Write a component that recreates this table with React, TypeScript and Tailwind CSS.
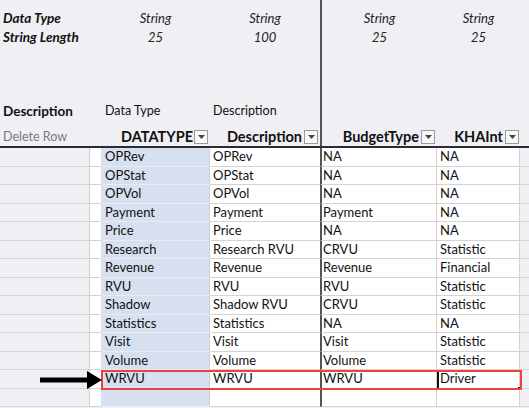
import React from "react";

const font = { fontFamily: "Lato, 'Open Sans', sans-serif" };

const rows = [
  ["OPRev", "OPRev", "NA", "NA"],
  ["OPStat", "OPStat", "NA", "NA"],
  ["OPVol", "OPVol", "NA", "NA"],
  ["Payment", "Payment", "Payment", "NA"],
  ["Price", "Price", "NA", "NA"],
  ["Research", "Research RVU", "CRVU", "Statistic"],
  ["Revenue", "Revenue", "Revenue", "Financial"],
  ["RVU", "RVU", "RVU", "Statistic"],
  ["Shadow", "Shadow RVU", "CRVU", "Statistic"],
  ["Statistics", "Statistics", "NA", "NA"],
  ["Visit", "Visit", "Visit", "Statistic"],
  ["Volume", "Volume", "Volume", "Statistic"],
  ["WRVU", "WRVU", "WRVU", "Driver"],
];

function Drop() {
  return (
    <span className="w-[14px] h-[14px] border border-[#9a9a9a] bg-[#f7f7f7] flex items-center justify-center shrink-0">
      <svg width="7" height="4" viewBox="0 0 7 4">
        <path d="M0 0h7L3.5 4z" fill="#444" />
      </svg>
    </span>
  );
}

function TopRow({ a, b, c, d, e, cls = "" }: { a?: React.ReactNode; b?: string; c?: string; d?: string; e?: string; cls?: string }) {
  return (
    <div className={`flex h-[19px] items-center ${cls}`}>
      <div className="w-[101px] pl-[3px] whitespace-nowrap">{a}</div>
      <div className="w-[109px] text-center">{b}</div>
      <div className="w-[110px] text-center h-full flex items-center justify-center">{c}</div>
      <div className="w-[117px] border-l-2 border-[#555] h-full flex items-center justify-center">{d}</div>
      <div className="w-[83px] text-center">{e}</div>
      <div className="flex-1" />
    </div>
  );
}

function DataRow({ r, last }: { r: string[]; last?: boolean }) {
  const line = "border-b border-[#d4d4d4]";
  return (
    <div className="flex h-[18.5px] text-[13px] text-[#111] leading-none">
      <div className={`w-[90px] ${line} border-r border-r-[#cfcfcf]`} />
      <div className={`w-[11px] bg-white ${line}`} />
      <div className="w-[109px] bg-[#d7e0ef] border-b border-[#e6ebf4] border-r border-r-[#c9d0dc] pl-[4px] flex items-center">{r[0]}</div>
      <div className={`w-[110px] bg-white ${line} pl-[3px] flex items-center whitespace-nowrap`}>{r[1]}</div>
      <div className={`w-[117px] bg-white ${line} border-l-2 border-l-[#555] border-r border-r-[#d4d4d4] pl-[1px] flex items-center`}>{r[2]}</div>
      <div
        className={`w-[83px] bg-white ${line} border-r border-r-[#d4d4d4] flex items-center relative ${
          last ? "border-l-2 border-l-[#111] pl-[1px]" : "pl-[3px]"
        }`}
      >
        {r[3]}
        {last && <span className="absolute right-[-3px] bottom-[-3px] w-[5px] h-[5px] bg-[#111] border border-white" />}
      </div>
      <div className={`flex-1 ${line}`} />
    </div>
  );
}

export default function App() {
  return (
    <div className="w-[529px] h-[408px] bg-[#f0eff3] overflow-hidden relative text-[#111]" style={font}>
      <div className="h-[9px] flex">
        <div className="w-[320px]" />
        <div className="w-[2px] bg-[#555]" />
      </div>
      <TopRow a={<span className="font-bold italic text-[13.5px] text-[#111]">Data Type</span>} b="String" c="String" d="String" e="String" cls="italic text-[13px] text-[#222]" />
      <TopRow a={<span className="font-bold italic text-[13.5px] text-[#111]">String Length</span>} b="25" c="100" d="25" e="25" cls="italic text-[13px] text-[#222]" />
      <TopRow cls="h-[55px]" />
      <div className="flex h-[19px] items-center text-[12.5px]">
        <div className="w-[101px] pl-[3px] font-bold text-[13.5px]">Description</div>
        <div className="w-[109px] pl-[4px]">Data Type</div>
        <div className="w-[110px] pl-[3px]">Description</div>
        <div className="w-[117px] border-l-2 border-[#555] h-full" />
        <div className="flex-1" />
      </div>
      <div className="flex h-[7px]">
        <div className="w-[320px]" />
        <div className="w-[2px] bg-[#555]" />
      </div>
      <div className="flex h-[20px] items-center border-b-2 border-[#2b2b38] font-bold text-[14.5px]">
        <div className="w-[101px] pl-[3px] font-normal text-[12.5px] text-[#7a7a7a]">Delete Row</div>
        <div className="w-[109px] flex items-center justify-end gap-[1px] pr-[2px]">
          DATATYPE <Drop />
        </div>
        <div className="w-[110px] flex items-center justify-end gap-[2px] pr-[2px]">
          Description <Drop />
        </div>
        <div className="w-[117px] h-full border-l-2 border-[#555] flex items-center justify-end gap-[2px] pr-[2px]">
          BudgetType <Drop />
        </div>
        <div className="w-[83px] flex items-center justify-end gap-[2px] pr-[1px]">
          KHAInt <Drop />
        </div>
        <div className="flex-1" />
      </div>
      {rows.map((r, i) => (
        <DataRow key={i} r={r} last={i === rows.length - 1} />
      ))}
      <DataRow r={["", "", "", ""]} />

      {/* highlight box and arrow */}
      <div className="absolute left-[101px] top-[370px] w-[421px] h-[20px] border-2 border-[#ef4040] pointer-events-none" />
      <svg className="absolute left-[40px] top-[371px]" width="62" height="18" viewBox="0 0 62 18">
        <path d="M0 6.5h47V0l15 9-15 9v-6.5H0z" fill="#000" />
      </svg>
    </div>
  );
}
